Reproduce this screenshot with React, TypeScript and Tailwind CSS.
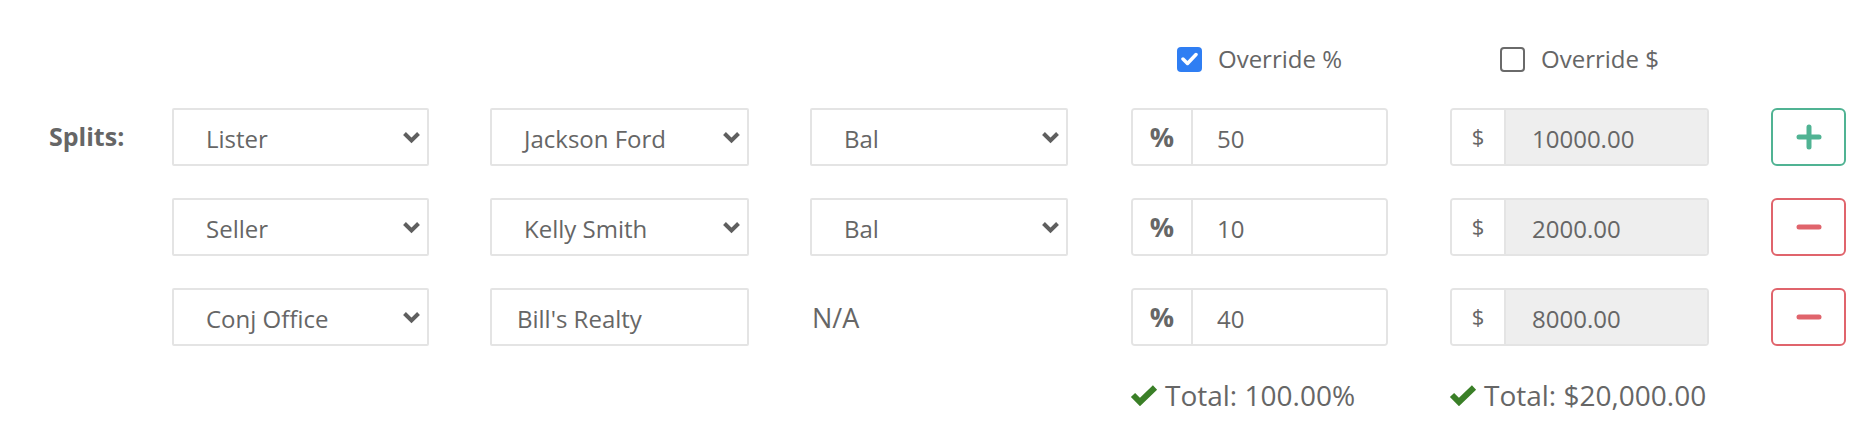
import React from "react";

const Chevron = () => (
  <svg width="19" height="13" viewBox="0 0 19 13" className="shrink-0">
    <polyline points="2.5,2.5 9.5,9.5 16.5,2.5" fill="none" stroke="#5f5f5f" strokeWidth="4" strokeLinejoin="miter" strokeLinecap="butt" />
  </svg>
);

const Select = ({ value, w }: { value: string; w: string }) => (
  <div className={`${w} h-[58px] border-2 border-[#e4e4e4] rounded-[2px] bg-white flex items-center pl-[32px] pr-[6px]`}>
    <span className="flex-1 pt-[3px] text-[24px] text-[#666666]">{value}</span>
    <Chevron />
  </div>
);

const PctGroup = ({ value }: { value: string }) => (
  <div className="w-[257px] h-[58px] border-2 border-[#e4e4e4] rounded-[4px] flex overflow-hidden">
    <div className="w-[60px] h-full border-r-2 border-[#e4e4e4] flex items-center justify-center text-[27px] font-bold text-[#666666] bg-white">%</div>
    <div className="flex-1 flex items-center pl-[24px] pt-[3px] text-[24px] text-[#666666] bg-white">{value}</div>
  </div>
);

const DolGroup = ({ value }: { value: string }) => (
  <div className="w-[259px] h-[58px] border-2 border-[#e4e4e4] rounded-[4px] flex overflow-hidden">
    <div className="w-[54px] h-full border-r-2 border-[#e4e4e4] flex items-center justify-center text-[22px] text-[#666666] bg-white pb-[2px]">$</div>
    <div className="flex-1 flex items-center pl-[26px] pt-[3px] text-[24px] text-[#666666] bg-[#eeeeee]">{value}</div>
  </div>
);

const PlusBtn = () => (
  <div className="w-[75px] h-[58px] border-2 border-[#50b393] rounded-[6px] flex items-center justify-center bg-white">
    <svg width="26" height="26" viewBox="0 0 26 26">
      <rect x="0.5" y="10.5" width="25" height="5" rx="2.5" fill="#50b393" />
      <rect x="10.5" y="0.5" width="5" height="25" rx="2.5" fill="#50b393" />
    </svg>
  </div>
);

const MinusBtn = () => (
  <div className="w-[75px] h-[58px] border-2 border-[#e0646c] rounded-[6px] flex items-center justify-center bg-white">
    <svg width="26" height="6" viewBox="0 0 26 6">
      <rect x="0.5" y="0.5" width="25" height="5" rx="2.5" fill="#e0646c" />
    </svg>
  </div>
);

const Check = () => (
  <svg width="28" height="22" viewBox="0 0 28 22" className="shrink-0">
    <polyline points="3,11 10,18 25,3.5" fill="none" stroke="#3a7f27" strokeWidth="6" strokeLinejoin="miter" strokeLinecap="butt" />
  </svg>
);

export default function App() {
  return (
    <div className="w-[1876px] h-[438px] bg-white text-[#666666]" style={{ fontFamily: "'Open Sans', 'Noto Sans', sans-serif" }}>
      <div className="pt-[46px]">
        {/* checkbox header row */}
        <div className="flex h-[26px] items-center">
          <div className="w-[172px]" />
          <div className="w-[257px]" />
          <div className="ml-[61px] w-[259px]" />
          <div className="ml-[61px] w-[258px]" />
          <div className="ml-[63px] w-[257px] flex items-center justify-center gap-[16px]">
            <div className="w-[25px] h-[25px] rounded-[4px] bg-[#2f7ef3] flex items-center justify-center">
              <svg width="17" height="14" viewBox="0 0 17 14">
                <polyline points="2,7 6.5,11.5 15,2.5" fill="none" stroke="#ffffff" strokeWidth="3.5" strokeLinecap="round" strokeLinejoin="round" />
              </svg>
            </div>
            <span className="text-[24px] leading-none">Override %</span>
          </div>
          <div className="ml-[62px] w-[259px] flex items-center justify-center gap-[16px]">
            <div className="w-[25px] h-[25px] rounded-[4px] border-2 border-[#6a6a6a] bg-white" />
            <span className="text-[24px] leading-none">Override $</span>
          </div>
        </div>

        <div className="mt-[36px] flex flex-col gap-[32px]">
          {/* row 1 */}
          <div className="flex items-center h-[58px]">
            <div className="w-[172px] pl-[49px] text-[25px] font-bold text-[#666666]">Splits:</div>
            <Select value="Lister" w="w-[257px]" />
            <div className="ml-[61px]"><Select value="Jackson Ford" w="w-[259px]" /></div>
            <div className="ml-[61px]"><Select value="Bal" w="w-[258px]" /></div>
            <div className="ml-[63px]"><PctGroup value="50" /></div>
            <div className="ml-[62px]"><DolGroup value="10000.00" /></div>
            <div className="ml-[62px]"><PlusBtn /></div>
          </div>
          {/* row 2 */}
          <div className="flex items-center h-[58px]">
            <div className="w-[172px]" />
            <Select value="Seller" w="w-[257px]" />
            <div className="ml-[61px]"><Select value="Kelly Smith" w="w-[259px]" /></div>
            <div className="ml-[61px]"><Select value="Bal" w="w-[258px]" /></div>
            <div className="ml-[63px]"><PctGroup value="10" /></div>
            <div className="ml-[62px]"><DolGroup value="2000.00" /></div>
            <div className="ml-[62px]"><MinusBtn /></div>
          </div>
          {/* row 3 */}
          <div className="flex items-center h-[58px]">
            <div className="w-[172px]" />
            <Select value="Conj Office" w="w-[257px]" />
            <div className="ml-[61px] w-[259px] h-[58px] border-2 border-[#e4e4e4] rounded-[2px] bg-white flex items-center pl-[25px] pt-[3px] text-[24px]">Bill's Realty</div>
            <div className="ml-[61px] w-[258px] h-[58px] flex items-center pl-[2px] pt-[2px] text-[27px]">N/A</div>
            <div className="ml-[63px]"><PctGroup value="40" /></div>
            <div className="ml-[62px]"><DolGroup value="8000.00" /></div>
            <div className="ml-[62px]"><MinusBtn /></div>
          </div>
        </div>

        {/* totals */}
        <div className="mt-[28px] flex items-center">
          <div className="w-[172px]" />
          <div className="w-[257px]" />
          <div className="ml-[61px] w-[259px]" />
          <div className="ml-[61px] w-[258px]" />
          <div className="ml-[62px] w-[258px] flex items-center gap-[7px] text-[28px]">
            <Check />
            <span>Total: 100.00%</span>
          </div>
          <div className="ml-[61px] w-[300px] flex items-center gap-[7px] text-[28px]">
            <Check />
            <span>Total: $20,000.00</span>
          </div>
        </div>
      </div>
    </div>
  );
}
